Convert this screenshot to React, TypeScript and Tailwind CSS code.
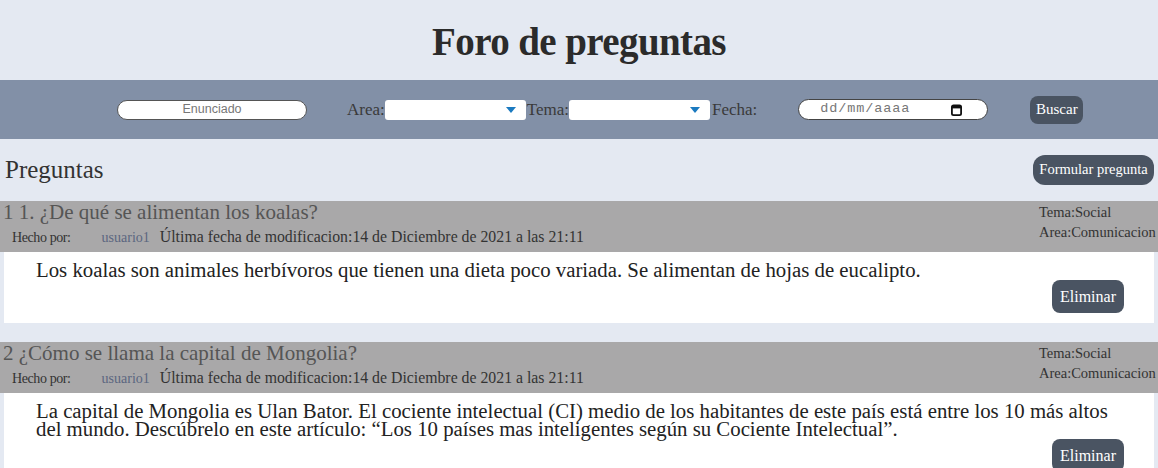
const serif = { fontFamily: '"Liberation Serif", "DejaVu Serif", serif' };

const preguntas = [
  {
    id: 1,
    titulo: "1 1. ¿De qué se alimentan los koalas?",
    autor: "usuario1",
    fecha: "14 de Diciembre de 2021 a las 21:11",
    tema: "Social",
    area: "Comunicacion",
    texto: "Los koalas son animales herbívoros que tienen una dieta poco variada. Se alimentan de hojas de eucalipto.",
  },
  {
    id: 2,
    titulo: "2 ¿Cómo se llama la capital de Mongolia?",
    autor: "usuario1",
    fecha: "14 de Diciembre de 2021 a las 21:11",
    tema: "Social",
    area: "Comunicacion",
    texto:
      "La capital de Mongolia es Ulan Bator. El cociente intelectual (CI) medio de los habitantes de este país está entre los 10 más altos del mundo. Descúbrelo en este artículo: “Los 10 países mas inteligentes según su Cociente Intelectual”.",
  },
];

function Select() {
  return (
    <div className="flex h-[20px] w-[141px] items-center justify-end rounded-[3px] bg-white pr-[10px]">
      <svg width="10" height="6" viewBox="0 0 10 6">
        <path d="M0 0 H10 L5 6 Z" fill="#1b7ac0" />
      </svg>
    </div>
  );
}

export default function App() {
  return (
    <div className="min-h-[468px] w-[1158px] overflow-hidden bg-[#e4e9f2] text-[#333]" style={serif}>
      {/* cabecera */}
      <header className="flex h-[80px] items-center justify-center pt-[4px]">
        <h1 className="text-[39px] font-bold tracking-[-0.6px] text-[#2b2b2b]">Foro de preguntas</h1>
      </header>

      {/* filtros */}
      <div className="flex h-[59px] items-center bg-[#8290a7] pl-[117px] text-[17px]">
        <div
          className="flex h-[20px] w-[190px] items-center justify-center rounded-full border border-[#555] bg-white text-[12.5px] text-[#777]"
          style={{ fontFamily: '"Liberation Sans", Arial, sans-serif' }}
        >
          Enunciado
        </div>
        <span className="ml-[40px] text-[#3a3a3a]">Area:</span>
        <Select />
        <span className="ml-[1px] text-[#3a3a3a]">Tema:</span>
        <Select />
        <span className="ml-[2px] text-[#3a3a3a]">Fecha:</span>
        <div className="ml-[41px] flex h-[21px] w-[190px] items-center justify-between rounded-full border border-[#444] bg-white pl-[21px] pr-[25px]">
          <span
            className="text-[13.5px] tracking-[0.9px] text-[#777]"
            style={{ fontFamily: '"Liberation Mono", monospace' }}
          >
            dd/mm/aaaa
          </span>
          <svg width="11" height="12" viewBox="0 0 11 12">
            <rect x="0.9" y="1.4" width="9.2" height="9.7" rx="1.6" fill="none" stroke="#111" strokeWidth="1.8" />
            <rect x="0.9" y="1.4" width="9.2" height="3" fill="#111" />
          </svg>
        </div>
        <button className="ml-[42px] h-[28px] w-[53px] rounded-lg bg-[#4a5462] text-[15px] text-white">Buscar</button>
      </div>

      {/* titulo de la lista */}
      <div className="flex h-[62px] items-center justify-between pl-[5px] pr-[4px]">
        <h2 className="text-[25px] text-[#333]">Preguntas</h2>
        <button className="h-[30px] w-[121px] rounded-xl bg-[#4a5462] text-[14.5px] text-white">
          Formular pregunta
        </button>
      </div>

      <div className="flex flex-col gap-[19px]">
        {preguntas.map((p) => (
          <div key={p.id}>
            <div className="flex h-[51px] justify-between bg-[#a9a8a9]">
              <div>
                <div className="pl-[3px] text-[21px] leading-[22px] text-[#555]">{p.titulo}</div>
                <div className="mt-[4px] flex items-baseline pl-[12px] leading-[20px]">
                  <span className="text-[14px] tracking-[-0.4px] text-[#333]">Hecho por:</span>
                  <span className="ml-[31px] text-[14px] text-[#5b6680]">{p.autor}</span>
                  <span className="ml-[10px] text-[15.8px] text-[#333]">Última fecha de modificacion:{p.fecha}</span>
                </div>
              </div>
              <div className="w-[119px] shrink-0 whitespace-nowrap pt-[1px] text-[14.5px] leading-[20px] text-[#333]">
                <div>Tema:{p.tema}</div>
                <div>Area:{p.area}</div>
              </div>
            </div>
            <div className="mx-[4px] flex flex-col bg-white pb-[10px] pl-[32px] pr-[30px] pt-[9px]">
              <p className="text-[20.8px] leading-[18px] text-[#222]">{p.texto}</p>
              <div className="flex justify-end">
                <button className="mt-[1px] h-[33px] w-[72px] rounded-lg bg-[#4a5462] text-[16px] text-white">
                  Eliminar
                </button>
              </div>
            </div>
          </div>
        ))}
      </div>
    </div>
  );
}
